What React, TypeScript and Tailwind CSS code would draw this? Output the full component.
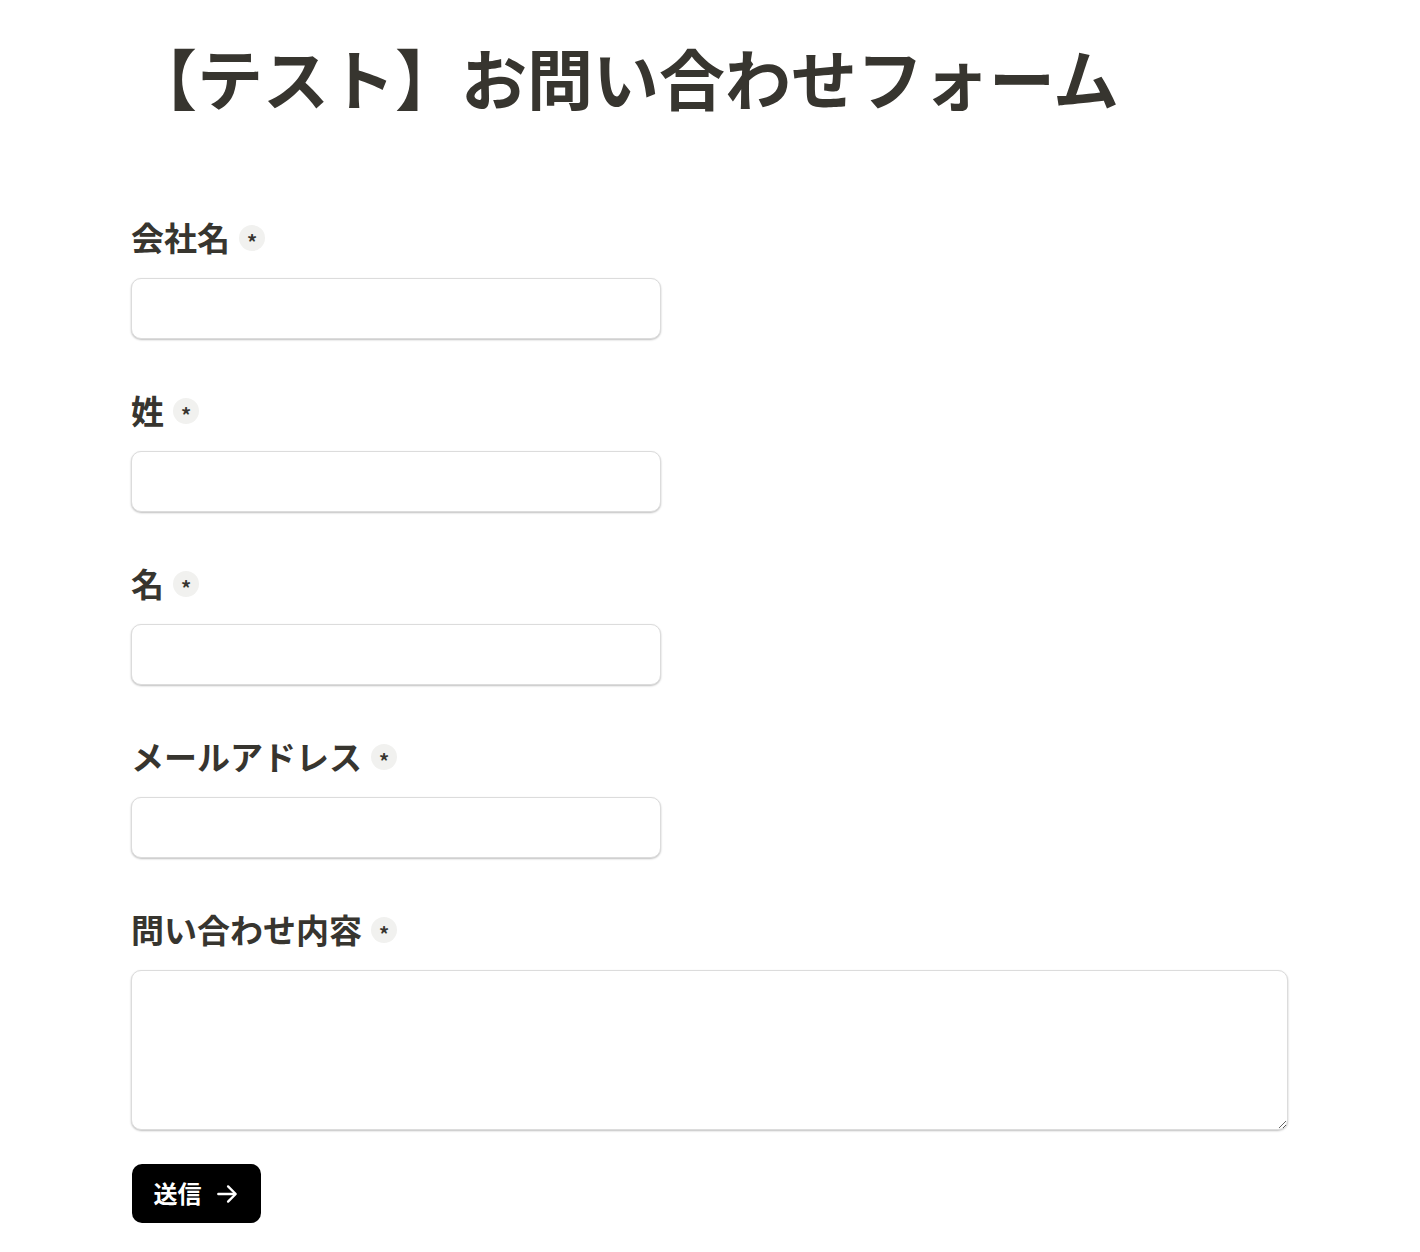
import React from "react";

const font = { fontFamily: '"Noto Sans CJK JP", "Noto Sans", sans-serif' };

function Label({ text }: { text: string }) {
  return (
    <div className="flex items-start gap-[9px] h-[40px]">
      <span className="text-[33px] leading-[36px] font-bold text-[#37352f]">{text}</span>
      <span className="mt-[6px] w-[26px] h-[26px] rounded-full bg-[#f1f1ef] flex items-center justify-center text-[20px] font-bold text-[#37352f] leading-none pt-[7px]">
        *
      </span>
    </div>
  );
}

function Field({ text }: { text: string }) {
  return (
    <div className="flex flex-col">
      <Label text={text} />
      <input
        className="mt-[19px] w-[530px] h-[61px] rounded-[10px] border border-[#dcdcdc] bg-white shadow-[0_1px_2px_rgba(0,0,0,0.25)] outline-none px-4"
        type="text"
      />
    </div>
  );
}

export default function App() {
  return (
    <div className="min-h-[1252px] bg-white" style={font}>
      <div className="pl-[131px] pr-[132px]">
        <h1 className="pt-[36px] text-[66px] leading-[80px] font-bold text-[#37352f]">
          【テスト】お問い合わせフォーム
        </h1>
        <div className="mt-[103px] flex flex-col gap-[53px]">
          <Field text="会社名" />
          <Field text="姓" />
          <Field text="名" />
          <Field text="メールアドレス" />
          <div className="flex flex-col">
            <Label text="問い合わせ内容" />
            <textarea className="mt-[19px] w-[1157px] h-[160px] rounded-[10px] border border-[#dcdcdc] bg-white shadow-[0_1px_2px_rgba(0,0,0,0.25)] outline-none px-4 py-3" />
          </div>
        </div>
        <button className="mt-[34px] ml-[1px] w-[129px] h-[59px] rounded-[10px] bg-black text-white flex items-center justify-center gap-[12px]">
          <span className="text-[24px] font-bold leading-none -mt-[2px]">送信</span>
          <svg width="26" height="26" viewBox="0 0 24 24" fill="none" stroke="white" strokeWidth="2.2" strokeLinecap="round" strokeLinejoin="round">
            <path d="M4 12h15" />
            <path d="M13 5l7 7-7 7" />
          </svg>
        </button>
      </div>
    </div>
  );
}
